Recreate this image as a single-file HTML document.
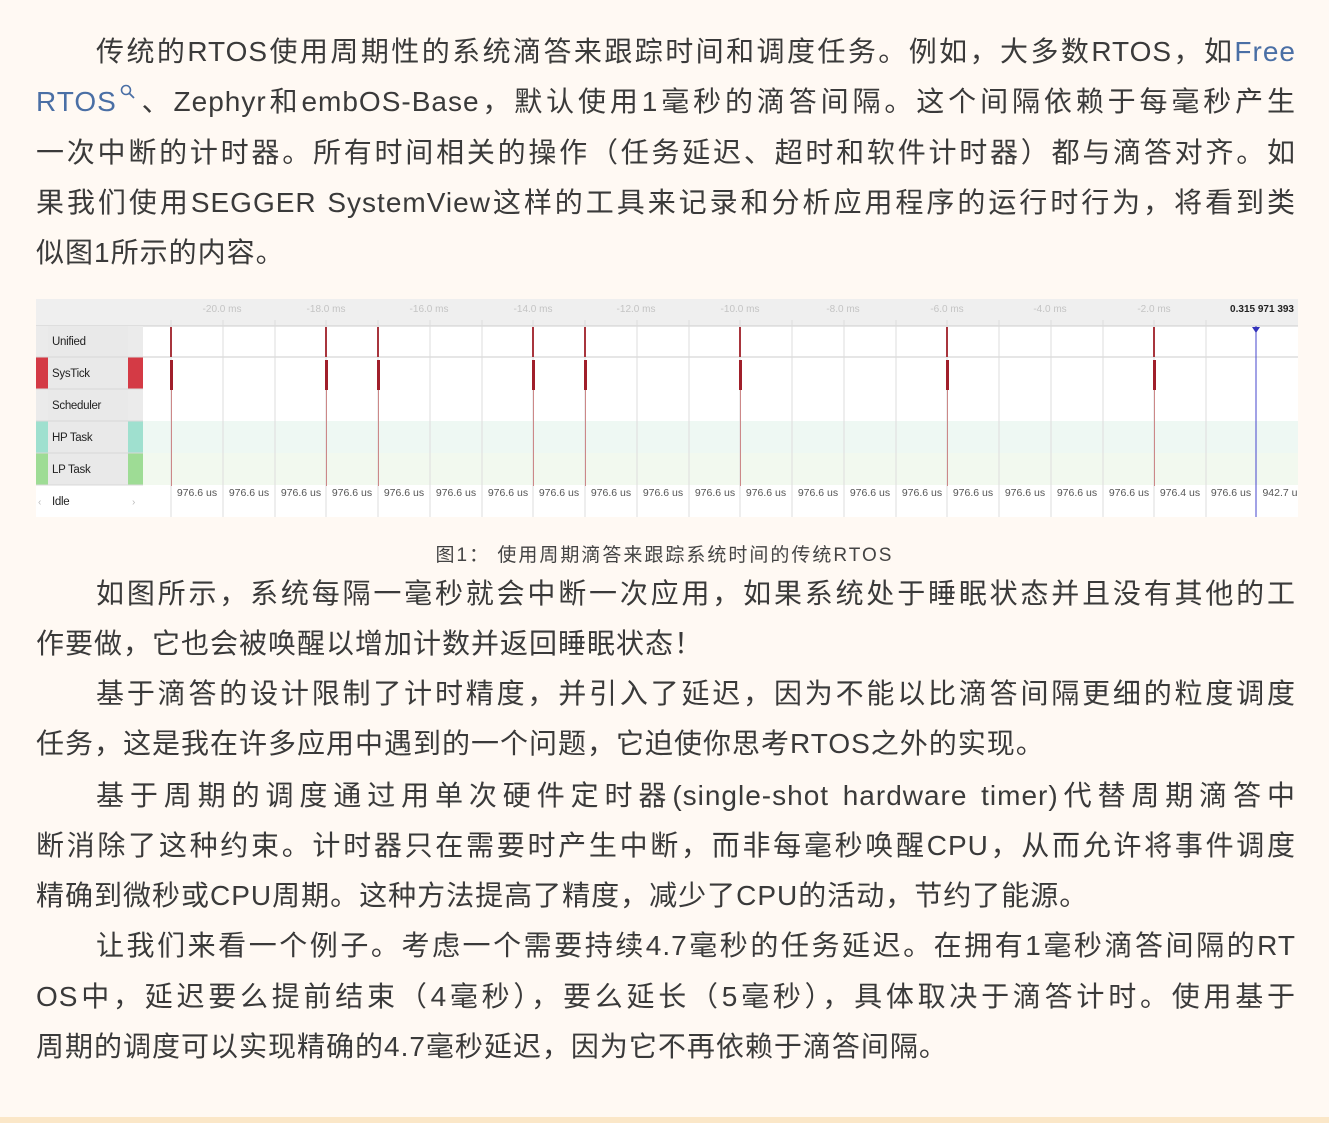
<!DOCTYPE html>
<html><head><meta charset="utf-8"><style>
html,body{margin:0;padding:0;}
body{width:1329px;height:1123px;background:#fff9f3;position:relative;overflow:hidden;font-family:"Liberation Sans","Noto Sans CJK SC",sans-serif;color:#3a3a3a;}
.l{position:absolute;left:36px;width:1260px;height:50px;line-height:50px;font-size:28px;letter-spacing:1px;text-align:justify;text-align-last:justify;white-space:nowrap;}
.i{left:96px;width:1200px;}
.s{text-align-last:left;}
a{color:#4a6fa5;text-decoration:none;}
.q{display:inline-block;position:relative;width:22px;height:20px;vertical-align:top;}
.cap{position:absolute;left:0;width:1329px;top:540px;text-align:center;font-size:19px;color:#444;letter-spacing:2px;}
.bar{position:absolute;left:0;bottom:0;width:1329px;height:6px;background:#fbe7c8;}
</style></head><body>
<div class="l i" style="top:27px">传统的RTOS使用周期性的系统滴答来跟踪时间和调度任务。例如，大多数RTOS，如<a>Free</a></div>
<div class="l" style="top:77px"><a>RTOS</a><span class="q"><svg width="18" height="18" style="position:absolute;left:2px;top:6px"><circle cx="7" cy="7" r="4.5" fill="none" stroke="#4a6fa5" stroke-width="1.6"/><line x1="10.5" y1="10.5" x2="15" y2="15" stroke="#4a6fa5" stroke-width="1.8"/></svg></span>、Zephyr和embOS-Base，默认使用1毫秒的滴答间隔。这个间隔依赖于每毫秒产生</div>
<div class="l" style="top:128px">一次中断的计时器。所有时间相关的操作（任务延迟、超时和软件计时器）都与滴答对齐。如</div>
<div class="l" style="top:178px">果我们使用SEGGER SystemView这样的工具来记录和分析应用程序的运行时行为，将看到类</div>
<div class="l s" style="top:228px">似图1所示的内容。</div>

<svg style="position:absolute;left:36px;top:299px" width="1262" height="218" viewBox="36 299 1262 218" font-family="Liberation Sans,sans-serif">
<rect x="36" y="299" width="1262" height="218" fill="#fff"/>
<rect x="36" y="299" width="1262" height="27" fill="#efefef"/>
<line x1="36" y1="326" x2="1298" y2="326" stroke="#ccc"/>
<rect x="143" y="421" width="1155" height="32" fill="#eef8f3"/>
<rect x="143" y="453" width="1155" height="32" fill="#f2f9ef"/>
<line x1="143" y1="357" x2="1298" y2="357" stroke="#ccc"/>
<rect x="36" y="326" width="107" height="191" fill="#ebebeb"/>
<rect x="48" y="326" width="80" height="191" fill="#e9e9e9"/>
<rect x="36" y="357" width="12" height="32" fill="#d43a45"/><rect x="128" y="357" width="15" height="32" fill="#d43a45"/>
<rect x="36" y="421" width="12" height="32" fill="#9fe0cf"/><rect x="128" y="421" width="15" height="32" fill="#9fe0cf"/>
<rect x="36" y="453" width="12" height="32" fill="#9edc95"/><rect x="128" y="453" width="15" height="32" fill="#9edc95"/>
<rect x="36" y="485" width="107" height="32" fill="#fff"/>
<g stroke="#d8d8d8"><line x1="36" y1="357" x2="143" y2="357"/><line x1="36" y1="389" x2="143" y2="389"/><line x1="36" y1="421" x2="143" y2="421"/><line x1="36" y1="453" x2="143" y2="453"/><line x1="36" y1="485" x2="143" y2="485"/></g>
<g font-size="11.5" fill="#222" letter-spacing="-0.3"><text x="52" y="345">Unified</text><text x="52" y="377">SysTick</text><text x="52" y="409">Scheduler</text><text x="52" y="441">HP Task</text><text x="52" y="473">LP Task</text><text x="52" y="505">Idle</text></g>
<text x="38" y="505" font-size="10" fill="#bbb">‹</text><text x="132" y="505" font-size="10" fill="#bbb">›</text>
<g stroke="#ddd" stroke-width="1">
<line x1="171" y1="320" x2="171" y2="517"/><line x1="223" y1="320" x2="223" y2="517"/><line x1="275" y1="320" x2="275" y2="517"/><line x1="326" y1="320" x2="326" y2="517"/><line x1="378" y1="320" x2="378" y2="517"/><line x1="430" y1="320" x2="430" y2="517"/><line x1="482" y1="320" x2="482" y2="517"/><line x1="533" y1="320" x2="533" y2="517"/><line x1="585" y1="320" x2="585" y2="517"/><line x1="637" y1="320" x2="637" y2="517"/><line x1="689" y1="320" x2="689" y2="517"/><line x1="740" y1="320" x2="740" y2="517"/><line x1="792" y1="320" x2="792" y2="517"/><line x1="844" y1="320" x2="844" y2="517"/><line x1="896" y1="320" x2="896" y2="517"/><line x1="947" y1="320" x2="947" y2="517"/><line x1="999" y1="320" x2="999" y2="517"/><line x1="1051" y1="320" x2="1051" y2="517"/><line x1="1103" y1="320" x2="1103" y2="517"/><line x1="1154" y1="320" x2="1154" y2="517"/><line x1="1206" y1="320" x2="1206" y2="517"/>
</g>
<g font-size="10" fill="#c4c4c4" text-anchor="middle"><text x="222" y="312">-20.0 ms</text><text x="326" y="312">-18.0 ms</text><text x="429" y="312">-16.0 ms</text><text x="533" y="312">-14.0 ms</text><text x="636" y="312">-12.0 ms</text><text x="740" y="312">-10.0 ms</text><text x="843" y="312">-8.0 ms</text><text x="947" y="312">-6.0 ms</text><text x="1050" y="312">-4.0 ms</text><text x="1154" y="312">-2.0 ms</text></g>
<text x="1294" y="312" font-size="10" font-weight="bold" fill="#222" text-anchor="end">0.315 971 393</text>
<g>
<g id="t"><rect x="170" y="327" width="2" height="30" fill="#a8353d"/><rect x="170" y="360" width="3" height="30" fill="#a01f2a"/><rect x="171" y="390" width="1" height="96" fill="#c88"/></g>
<use href="#t" x="155"/><use href="#t" x="207"/><use href="#t" x="362"/><use href="#t" x="414"/><use href="#t" x="569"/><use href="#t" x="776"/><use href="#t" x="983"/>
</g>
<line x1="1256" y1="326" x2="1256" y2="517" stroke="#4444cc"/>
<polygon points="1252,327 1260,327 1256,333" fill="#3333bb"/>
<g font-size="10.5" fill="#555" text-anchor="middle">
<text x="197" y="496">976.6 us</text><text x="249" y="496">976.6 us</text><text x="301" y="496">976.6 us</text><text x="352" y="496">976.6 us</text><text x="404" y="496">976.6 us</text><text x="456" y="496">976.6 us</text><text x="508" y="496">976.6 us</text><text x="559" y="496">976.6 us</text><text x="611" y="496">976.6 us</text><text x="663" y="496">976.6 us</text><text x="715" y="496">976.6 us</text><text x="766" y="496">976.6 us</text><text x="818" y="496">976.6 us</text><text x="870" y="496">976.6 us</text><text x="922" y="496">976.6 us</text><text x="973" y="496">976.6 us</text><text x="1025" y="496">976.6 us</text><text x="1077" y="496">976.6 us</text><text x="1129" y="496">976.6 us</text><text x="1180" y="496">976.4 us</text><text x="1231" y="496">976.6 us</text><text x="1280" y="496">942.7 u</text>
</g>
</svg>

<div class="cap">图1： 使用周期滴答来跟踪系统时间的传统RTOS</div>

<div class="l i" style="top:569px">如图所示，系统每隔一毫秒就会中断一次应用，如果系统处于睡眠状态并且没有其他的工</div>
<div class="l s" style="top:619px">作要做，它也会被唤醒以增加计数并返回睡眠状态！</div>
<div class="l i" style="top:669px">基于滴答的设计限制了计时精度，并引入了延迟，因为不能以比滴答间隔更细的粒度调度</div>
<div class="l s" style="top:719px">任务，这是我在许多应用中遇到的一个问题，它迫使你思考RTOS之外的实现。</div>
<div class="l i" style="top:771px">基于周期的调度通过用单次硬件定时器(single-shot hardware timer)代替周期滴答中</div>
<div class="l" style="top:821px">断消除了这种约束。计时器只在需要时产生中断，而非每毫秒唤醒CPU，从而允许将事件调度</div>
<div class="l s" style="top:871px">精确到微秒或CPU周期。这种方法提高了精度，减少了CPU的活动，节约了能源。</div>
<div class="l i" style="top:921px">让我们来看一个例子。考虑一个需要持续4.7毫秒的任务延迟。在拥有1毫秒滴答间隔的RT</div>
<div class="l" style="top:972px">OS中，延迟要么提前结束（4毫秒），要么延长（5毫秒），具体取决于滴答计时。使用基于</div>
<div class="l s" style="top:1022px">周期的调度可以实现精确的4.7毫秒延迟，因为它不再依赖于滴答间隔。</div>
<div class="bar"></div>
</body></html>
